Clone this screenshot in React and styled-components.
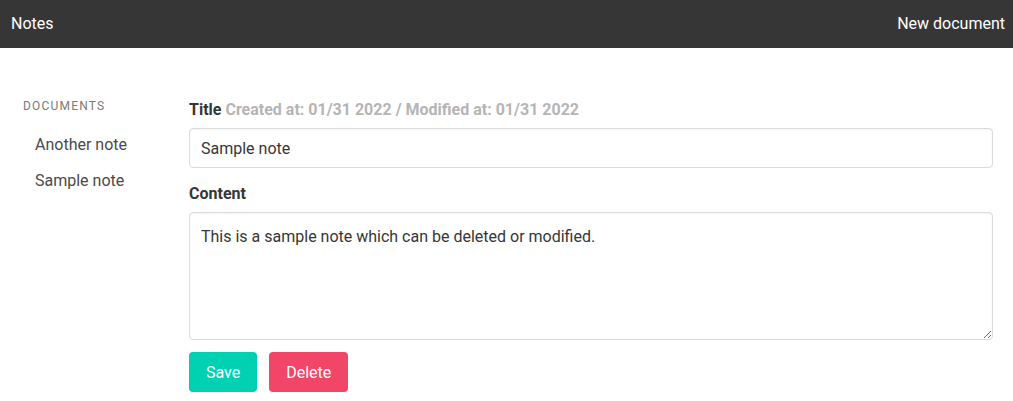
import styled, { createGlobalStyle } from 'styled-components'

const GlobalStyle = createGlobalStyle`
  * { box-sizing: border-box; }
  body {
    margin: 0;
    font-family: Roboto, "Liberation Sans", sans-serif;
    font-size: 16px;
    color: #4a4a4a;
    background: #fff;
  }
`

const NavBar = styled('nav')`
  display: flex;
  justify-content: space-between;
  align-items: center;
  height: 48px;
  background: #363636;
  padding: 0 8px 0 11px;
`

const NavItem = styled('a')`
  color: #fff;
  font-size: 16px;
  line-height: 24px;
  cursor: pointer;
`

const Main = styled('main')`
  display: grid;
  grid-template-columns: 166px 1fr;
  padding: 48px 20px 0 23px;
`

const MenuLabel = styled('p')`
  margin: 3px 0 13px;
  font-size: 12px;
  line-height: 15px;
  letter-spacing: 0.1em;
  text-transform: uppercase;
  color: #7a7a7a;
`

const MenuList = styled('ul')`
  list-style: none;
  margin: 0;
  padding: 0;
`

const MenuLink = styled('a')`
  display: block;
  padding: 8px 12px;
  line-height: 20px;
  color: #4a4a4a;
  cursor: pointer;
`

const Form = styled('div')`
  display: flex;
  flex-direction: column;
`

const Field = styled('div')`
  margin-bottom: 12px;
`

const Label = styled('label')`
  display: block;
  font-weight: 700;
  color: #363636;
  line-height: 24px;
  padding-top: 2px;
  margin-bottom: 6px;
`

const Meta = styled('span')`
  color: #b5b5b5;
`

const Input = styled('input')`
  display: block;
  width: 100%;
  height: 40px;
  padding: 7px 11px;
  font: inherit;
  color: #363636;
  border: 1px solid #dbdbdb;
  border-radius: 4px;
  box-shadow: inset 0 0.0625em 0.125em rgba(10, 10, 10, 0.05);
  outline: none;
`

const TextArea = styled('textarea')`
  display: block;
  width: 100%;
  height: 128px;
  padding: 12px 11px 11px;
  font: inherit;
  line-height: 1.5;
  color: #363636;
  border: 1px solid #dbdbdb;
  border-radius: 4px;
  box-shadow: inset 0 0.0625em 0.125em rgba(10, 10, 10, 0.05);
  outline: none;
  resize: vertical;
`

const Buttons = styled('div')`
  display: flex;
  gap: 12px;
`

const Button = styled('button')`
  height: 40px;
  padding: 0 17px;
  font: inherit;
  color: #fff;
  border: none;
  border-radius: 4px;
  background: ${p => (p.$danger ? '#f14668' : '#00d1b2')};
  cursor: pointer;
`

const App = () => {
  return (
    <>
      <GlobalStyle />
      <NavBar>
        <NavItem>Notes</NavItem>
        <NavItem>New document</NavItem>
      </NavBar>
      <Main>
        <aside>
          <MenuLabel>Documents</MenuLabel>
          <MenuList>
            <li><MenuLink>Another note</MenuLink></li>
            <li><MenuLink>Sample note</MenuLink></li>
          </MenuList>
        </aside>
        <Form>
          <Field>
            <Label>Title <Meta>Created at: 01/31 2022 / Modified at: 01/31 2022</Meta></Label>
            <Input defaultValue='Sample note' />
          </Field>
          <Field>
            <Label>Content</Label>
            <TextArea defaultValue='This is a sample note which can be deleted or modified.' />
          </Field>
          <Buttons>
            <Button>Save</Button>
            <Button $danger>Delete</Button>
          </Buttons>
        </Form>
      </Main>
    </>
  )
}

export default App
